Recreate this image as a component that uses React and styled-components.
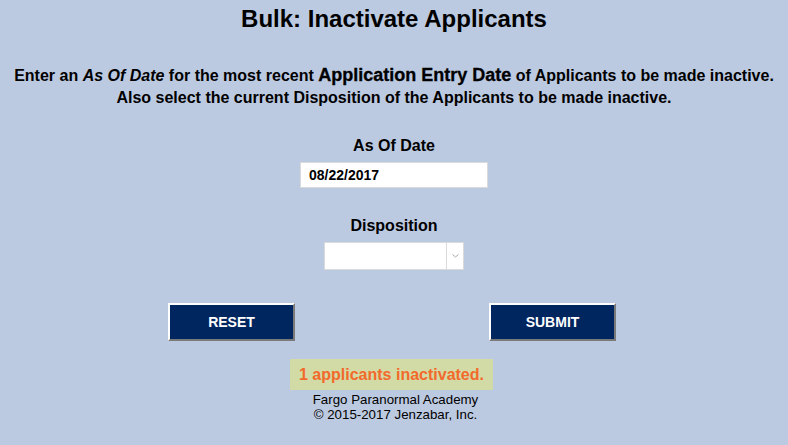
import React from "react";
import styled, { createGlobalStyle } from "styled-components";

const Global = createGlobalStyle`
  html, body {
    margin: 0;
    padding: 0;
    background: #bccae1;
  }
  body {
    font-family: "Liberation Sans", Arial, sans-serif;
    color: #000;
  }
`;

const Page = styled.div`
  width: 788px;
  height: 445px;
  display: flex;
  flex-direction: column;
  align-items: center;
  box-sizing: border-box;
  padding-top: 5px;
`;

const Title = styled.h1`
  margin: 0;
  font-size: 24px;
  font-weight: bold;
  line-height: 28px;
`;

const Instructions = styled.p`
  margin: 32px 0 0;
  font-size: 16px;
  font-weight: bold;
  line-height: 22px;
  text-align: center;
`;

const Emphasis = styled.strong`
  font-size: 18px;
  font-weight: 700;
  line-height: 16px;
  -webkit-text-stroke: 0.3px #000;
`;

const Field = styled.div`
  display: flex;
  flex-direction: column;
  align-items: center;
  margin-top: ${(p) => p.$top}px;
`;

const Label = styled.label`
  font-size: 16px;
  font-weight: bold;
  line-height: 19px;
  margin-bottom: 7px;
`;

const DateInput = styled.input`
  width: 188px;
  height: 26px;
  box-sizing: border-box;
  border: 1px solid #dadada;
  background: #fff;
  padding: 0 8px;
  font-family: "Liberation Sans", Arial, sans-serif;
  font-size: 14px;
  font-weight: bold;
  color: #000;
  outline: none;
`;

const Select = styled.div`
  width: 140px;
  height: 28px;
  box-sizing: border-box;
  border: 1px solid #dadada;
  background: #fff;
  display: flex;
  justify-content: flex-end;
`;

const Arrow = styled.span`
  width: 16px;
  border-left: 1px solid #dadada;
  display: flex;
  align-items: center;
  justify-content: center;
`;

const Buttons = styled.div`
  width: 448px;
  display: flex;
  justify-content: space-between;
  margin: 33px 4px 0 0;
`;

const Button = styled.button`
  width: 127px;
  height: 38px;
  box-sizing: border-box;
  background: #00265f;
  color: #fff;
  font-family: "Liberation Sans", Arial, sans-serif;
  font-size: 14px;
  font-weight: bold;
  border-style: solid;
  border-width: 2px;
  border-color: #ffffff #7a7a7a #7a7a7a #ffffff;
  padding: 0;
  cursor: pointer;
`;

const Notice = styled.div`
  margin: 18px 5px 0 0;
  width: 203px;
  height: 31px;
  box-sizing: border-box;
  background: #d2daa6;
  color: #f26a2b;
  font-size: 16px;
  font-weight: bold;
  display: flex;
  align-items: center;
  justify-content: center;
`;

const Footer = styled.div`
  margin: 3px 0 0 3px;
  font-size: 13.3px;
  line-height: 14.5px;
  text-align: center;
`;

export default function App() {
  return (
    <>
      <Global />
      <Page>
        <Title>Bulk: Inactivate Applicants</Title>
        <Instructions>
          Enter an <i>As Of Date</i> for the most recent{" "}
          <Emphasis>Application Entry Date</Emphasis> of Applicants to be made inactive.
          <br />
          Also select the current Disposition of the Applicants to be made inactive.
        </Instructions>
        <Field $top={27}>
          <Label>As Of Date</Label>
          <DateInput defaultValue="08/22/2017" />
        </Field>
        <Field $top={28}>
          <Label>Disposition</Label>
          <Select>
            <Arrow>
              <svg width="7" height="4" viewBox="0 0 7 4">
                <path d="M0.5 0.5 L3.5 3 L6.5 0.5" fill="none" stroke="#a8a8a8" strokeWidth="1" />
              </svg>
            </Arrow>
          </Select>
        </Field>
        <Buttons>
          <Button>RESET</Button>
          <Button>SUBMIT</Button>
        </Buttons>
        <Notice>1 applicants inactivated.</Notice>
        <Footer>
          Fargo Paranormal Academy
          <br />© 2015-2017 Jenzabar, Inc.
        </Footer>
      </Page>
    </>
  );
}
